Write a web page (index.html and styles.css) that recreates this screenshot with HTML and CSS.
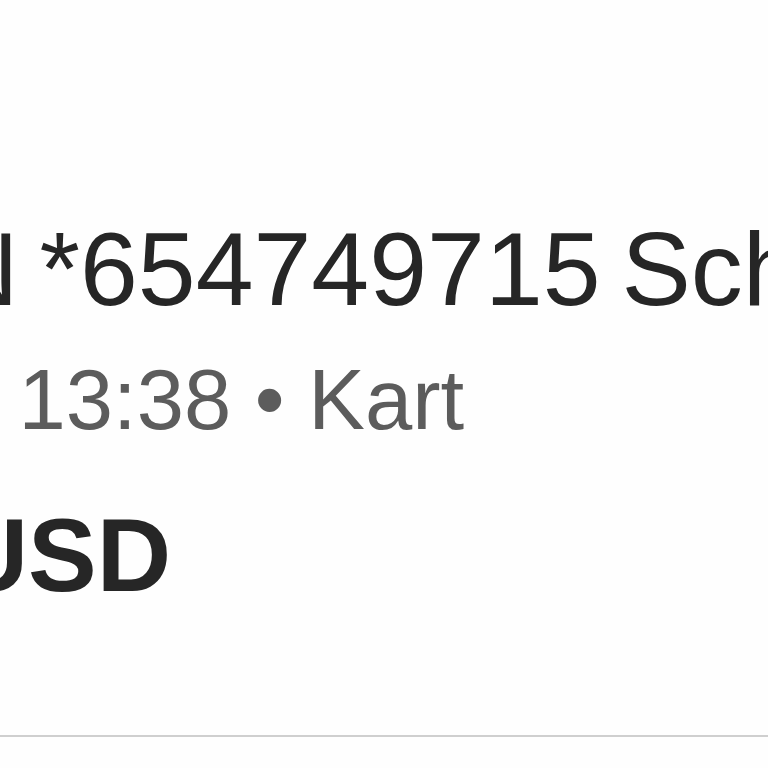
FILE: index.html
```html
<!DOCTYPE html>
<html lang="tr">
<head>
    <meta charset="UTF-8">
    <meta name="viewport" content="width=device-width, initial-scale=1.0">
    <title>İşlem</title>
    <link rel="stylesheet" href="styles.css">
</head>
<body>
    <div class="transaction">
        <div class="merchant">AMZN *654749715 Schaumburg</div>
        <div class="meta">12 Mar • 13:38 • Kart</div>
        <div class="amount">-25,00 USD</div>
    </div>
    <div class="divider"></div>
</body>
</html>
```

FILE: styles.css
```css
html, body {
    margin: 0;
    padding: 0;
    background: #fefefe;
    overflow: hidden;
}
body {
    width: 768px;
    height: 768px;
    font-family: 'Liberation Sans', Arial, sans-serif;
    color: #262626;
}
.transaction {
    padding-top: 217px;
    white-space: nowrap;
}
.merchant {
    font-size: 104px;
    line-height: 1;
    font-weight: 500;
    margin-left: -276px;
    word-spacing: -8px;
}
.meta {
    font-size: 85px;
    line-height: 1;
    color: #5c5c5c;
    margin-top: 36px;
    margin-left: -323px;
}
.amount {
    font-size: 103px;
    line-height: 1;
    font-weight: bold;
    margin-top: 62px;
    margin-left: -367px;
}
.divider {
    margin-top: 128px;
    height: 2px;
    background: #cfcfcf;
}
```
